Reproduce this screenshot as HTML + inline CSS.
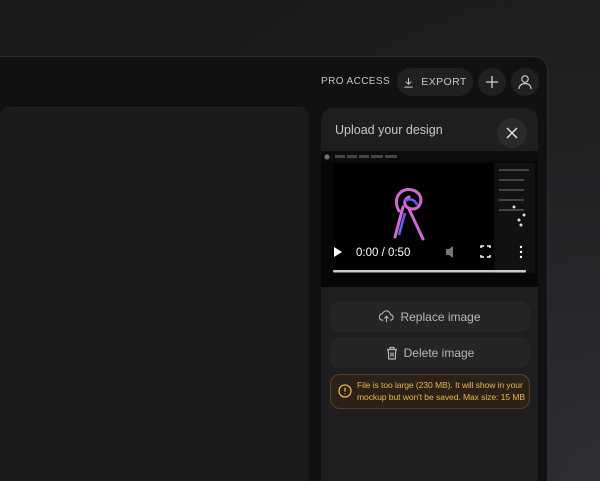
<!DOCTYPE html>
<html style="overflow:hidden;width:600px;height:481px"><head><style>
*{margin:0;padding:0;box-sizing:border-box}
body{width:600px;height:481px;overflow:hidden;position:relative;font-family:"Liberation Sans",sans-serif;
background:radial-gradient(circle at 600px 481px,#2e2e33 0,#222225 40%,#1a1a1c 80%);}
.win{position:absolute;left:-20px;top:56px;width:568px;height:425px;background:#111113;border:1px solid #2c2c2f;border-bottom:none;border-radius:14px 14px 0 0}
.left{position:absolute;left:0;top:107px;width:309px;height:374px;background:#1b1b1d;border-radius:10px 10px 0 0;border-top:1px solid #232326}
.right{position:absolute;left:321px;top:108px;width:217px;height:373px;background:#1e1e21;border-radius:12px 12px 0 0}
.pro{position:absolute;left:321px;top:76px;font-size:10px;color:#c4c4c8;letter-spacing:.4px;white-space:nowrap}
.exp{position:absolute;left:397px;top:68px;width:76px;height:28px;border-radius:14px;background:#202023;color:#c8c8cc;font-size:10.5px;letter-spacing:.4px;display:flex;align-items:center;justify-content:center;gap:7px}
.circ{position:absolute;top:68px;width:28px;height:28px;border-radius:14px;background:#202023;display:flex;align-items:center;justify-content:center}
.title{position:absolute;left:335px;top:123px;font-size:12.5px;color:#c8c8cc}
.close{position:absolute;left:497px;top:118px;width:30px;height:30px;border-radius:15px;background:#2a2a2d;display:flex;align-items:center;justify-content:center}
.img{position:absolute;left:321px;top:151px;width:217px;height:136px;background:#050505}
.btn{position:absolute;left:330px;width:200px;height:31px;border-radius:10px;background:#252528;color:#b8b8bc;font-size:12px;display:flex;align-items:center;justify-content:center;gap:6px}
.warn{position:absolute;left:330px;top:374px;width:200px;height:35px;border-radius:10px;background:#2b2119;border:1px solid #5a3f25;color:#e8b64a;font-size:8.6px;line-height:12px;padding:4px 0 0 26px;white-space:nowrap;letter-spacing:-0.1px}
</style></head><body>
<div class="win"></div>
<div class="left"></div>
<div class="right"></div>
<div class="pro">PRO ACCESS</div>
<div class="exp"><svg width="11" height="11" viewBox="0 0 12 12" fill="none" stroke="#c8c8cc" stroke-width="1.1"><path d="M6 1v7M3 5l3 3 3-3M1.5 11h9"/></svg>EXPORT</div>
<div class="circ" style="left:478px"><svg width="14" height="14" viewBox="0 0 14 14" stroke="#d0d0d4" stroke-width="1.3"><path d="M7 1v12M1 7h12"/></svg></div>
<div class="circ" style="left:511px"><svg width="16" height="16" viewBox="0 0 16 16" fill="none" stroke="#d0d0d4" stroke-width="1.2"><circle cx="8" cy="5" r="3.2"/><path d="M2 15c0-3.5 2.7-5.5 6-5.5s6 2 6 5.5"/></svg></div>
<div class="title">Upload your design</div>
<div class="close"><svg width="12" height="12" viewBox="0 0 12 12" stroke="#e0e0e4" stroke-width="1.5"><path d="M1 1l10 10M11 1L1 11"/></svg></div>
<div class="img">
<svg width="217" height="136" viewBox="0 0 217 136">
<rect x="0" y="0" width="217" height="136" fill="#070707"/>
<rect x="0" y="0" width="217" height="10" fill="#0c0c0c"/>
<rect x="12" y="12" width="160" height="110" fill="#000"/>
<rect x="174" y="12" width="40" height="110" fill="#111"/>
<circle cx="6" cy="6" r="2.5" fill="#777"/>
<g fill="#444"><rect x="14" y="4" width="10" height="3"/><rect x="26" y="4" width="10" height="3"/><rect x="38" y="4" width="10" height="3"/><rect x="50" y="4" width="12" height="3"/><rect x="64" y="4" width="12" height="3"/><rect x="178" y="18" width="30" height="2"/><rect x="178" y="28" width="25" height="2"/><rect x="178" y="38" width="25" height="2"/><rect x="178" y="48" width="25" height="2"/><rect x="178" y="58" width="25" height="2"/></g>
<g fill="#ddd"><circle cx="193" cy="56" r="1.5"/><circle cx="203" cy="64" r="1.5"/><circle cx="198" cy="69" r="1.5"/><circle cx="200" cy="74" r="1.5"/></g>
<path d="M78 60c-8-14 4-26 16-20 10 5 6 18-2 18-8 0-12-8-4-12M82 56l-8 30M88 58l14 30" fill="none" stroke="#d06ad0" stroke-width="3" stroke-linecap="round"/>
<path d="M84 50c4-3 10-2 12 4M84 62l-6 22" fill="none" stroke="#6a5cf0" stroke-width="2.5"/>
<path d="M13 96l8 5-8 5z" fill="#fff"/>
<text x="35" y="105" font-size="11.5" fill="#fff" font-family="Liberation Sans">0:00 / 0:50</text>
<path d="M125 98h3l4-3v12l-4-3h-3z" fill="#777"/>
<path d="M160 97v-2h3M166 95h3v2M169 104v2h-3M163 106h-3v-2" stroke="#fff" stroke-width="1.5" fill="none"/>
<g fill="#fff"><circle cx="200" cy="96" r="1.2"/><circle cx="200" cy="101" r="1.2"/><circle cx="200" cy="106" r="1.2"/></g>
<rect x="12" y="119" width="193" height="2.5" rx="1" fill="#ccc"/>
</svg></div>
<div class="btn" style="top:301px"><svg width="15" height="13" viewBox="0 0 16 14" fill="none" stroke="#b8b8bc" stroke-width="1.2"><path d="M4.5 11H4a3.5 3.5 0 0 1-.5-7 4.5 4.5 0 0 1 8.7 1A3 3 0 0 1 12 11h-.5M8 13V7M5.8 9L8 6.8 10.2 9"/></svg>Replace image</div>
<div class="btn" style="top:337px"><svg width="12" height="14" viewBox="0 0 12 14" fill="none" stroke="#b8b8bc" stroke-width="1.2"><path d="M1 3.5h10M4 3.5V1.5h4v2M2.2 3.5l.6 9.5h6.4l.6-9.5M5 6.5v4M7 6.5v4"/></svg>Delete image</div>
<div class="warn"><svg style="position:absolute;left:7px;top:9px" width="14" height="14" viewBox="0 0 14 14" fill="none" stroke="#e8b64a" stroke-width="1.3"><circle cx="7" cy="7" r="6"/><path d="M7 3.8v3.8M7 9.5v.8"/></svg>File is too large (230 MB). It will show in your<br>mockup but won't be saved. Max size: 15 MB</div>
</body></html>
